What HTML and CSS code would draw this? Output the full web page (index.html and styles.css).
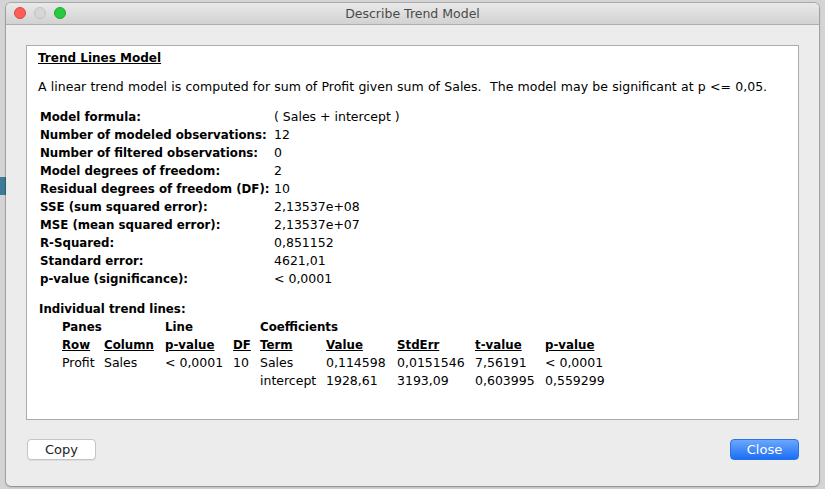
FILE: index.html
```html
<!DOCTYPE html>
<html>
<head>
<meta charset="utf-8">
<link rel="stylesheet" href="styles.css">
</head>
<body>
<div class="desk-mark"></div>
<div class="window">
  <div class="titlebar">
    <div class="lights">
      <span class="light red"></span>
      <span class="light gray"></span>
      <span class="light green"></span>
    </div>
    <div class="title">Describe Trend Model</div>
  </div>
  <div class="body">
    <div class="panel">
      <div class="heading">Trend Lines Model</div>
      <div class="intro">A linear trend model is computed for sum of Profit given sum of Sales.&nbsp; The model may be significant at p &lt;= 0,05.</div>
      <div class="stats">
        <div class="k">Model formula:</div><div class="v">( Sales + intercept )</div>
        <div class="k">Number of modeled observations:</div><div class="v">12</div>
        <div class="k">Number of filtered observations:</div><div class="v">0</div>
        <div class="k">Model degrees of freedom:</div><div class="v">2</div>
        <div class="k">Residual degrees of freedom (DF):</div><div class="v">10</div>
        <div class="k">SSE (sum squared error):</div><div class="v">2,13537e+08</div>
        <div class="k">MSE (mean squared error):</div><div class="v">2,13537e+07</div>
        <div class="k">R-Squared:</div><div class="v">0,851152</div>
        <div class="k">Standard error:</div><div class="v">4621,01</div>
        <div class="k">p-value (significance):</div><div class="v">&lt; 0,0001</div>
      </div>
      <div class="sub">Individual trend lines:</div>
      <div class="lines">
        <div class="grp span2">Panes</div>
        <div class="grp span2">Line</div>
        <div class="grp span5">Coefficients</div>

        <div class="h">Row</div>
        <div class="h">Column</div>
        <div class="h">p-value</div>
        <div class="h">DF</div>
        <div class="h">Term</div>
        <div class="h">Value</div>
        <div class="h">StdErr</div>
        <div class="h">t-value</div>
        <div class="h">p-value</div>

        <div>Profit</div>
        <div>Sales</div>
        <div>&lt; 0,0001</div>
        <div>10</div>
        <div>Sales</div>
        <div>0,114598</div>
        <div>0,0151546</div>
        <div>7,56191</div>
        <div>&lt; 0,0001</div>

        <div></div>
        <div></div>
        <div></div>
        <div></div>
        <div>intercept</div>
        <div>1928,61</div>
        <div>3193,09</div>
        <div>0,603995</div>
        <div>0,559299</div>
      </div>
    </div>
    <div class="buttons">
      <button class="btn copy">Copy</button>
      <button class="btn close">Close</button>
    </div>
  </div>
</div>
</body>
</html>
```
FILE: styles.css
```css
html, body {
  margin: 0;
  padding: 0;
}
body {
  width: 825px;
  height: 489px;
  background: #d4d4d4;
  font-family: "DejaVu Sans", "Liberation Sans", sans-serif;
  overflow: hidden;
  position: relative;
  padding: 3px 6px 0 6px;
  box-sizing: border-box;
}
.desk-mark {
  position: absolute;
  left: 0;
  top: 177px;
  width: 6px;
  height: 18px;
  background: #3f7b96;
}
.window {
  position: relative;
  width: 813px;
  height: 483px;
  background: #ececec;
  border-radius: 5px;
  box-shadow: 0 0 0 1px rgba(0,0,0,0.18), 0 1px 3px rgba(0,0,0,0.2);
  display: flex;
  flex-direction: column;
  overflow: hidden;
}
.titlebar {
  height: 21px;
  background: linear-gradient(#e9e9e9, #d2d2d2);
  border-bottom: 1px solid #aeaeae;
  position: relative;
  display: flex;
  align-items: center;
  justify-content: center;
  flex: none;
}
.lights {
  position: absolute;
  left: 8px;
  top: 4px;
  display: flex;
  gap: 8px;
}
.light {
  width: 12px;
  height: 12px;
  border-radius: 50%;
  box-sizing: border-box;
}
.light.red { background: #fc5f57; border: 1px solid #e0443e; }
.light.gray { background: #d6d6d6; border: 1px solid #c2c2c2; }
.light.green { background: #28c840; border: 1px solid #1aab29; }
.title {
  font-size: 12.5px;
  color: #4a4a4a;
}
.body {
  flex: 1;
  padding: 20px 20px 0 20px;
  display: flex;
  flex-direction: column;
}
.panel {
  background: #fff;
  border: 1px solid #ababab;
  height: 375px;
  box-sizing: border-box;
  padding: 3px 0 0 11px;
  font-size: 12.5px;
  line-height: 18px;
  color: #000;
}
.heading {
  font-weight: bold;
  font-size: 12px;
  text-decoration: underline;
}
.intro {
  margin-top: 11px;
  word-spacing: 0.3px;
}
.stats {
  margin-top: 12px;
  margin-left: 2px;
  display: grid;
  grid-template-columns: 234px auto;
}
.stats .k {
  font-weight: bold;
  font-size: 11.8px;
}
.sub {
  margin-top: 12px;
  margin-left: 1px;
  font-weight: bold;
  font-size: 11.8px;
}
.lines {
  margin-left: 24px;
  display: grid;
  grid-template-columns: 42px 61px 68px 27px 66px 71px 78px 70px 1fr;
  white-space: nowrap;
}
.lines .grp {
  font-weight: bold;
  font-size: 11.8px;
}
.span2 { grid-column: span 2; }
.span5 { grid-column: span 5; }
.lines .h {
  font-weight: bold;
  font-size: 11.8px;
  text-decoration: underline;
}
.buttons {
  display: flex;
  justify-content: space-between;
  margin-top: 19px;
  padding-left: 1px;
}
.btn {
  width: 69px;
  height: 21px;
  border-radius: 4px;
  font-family: "DejaVu Sans", "Liberation Sans", sans-serif;
  font-size: 13px;
  padding: 0;
  line-height: 19px;
}
.copy {
  background: #fff;
  border: 1px solid #c4c4c4;
  color: #222;
  box-shadow: 0 1px 0 rgba(0,0,0,0.06);
}
.close {
  background: linear-gradient(#6aa8fc, #1c6ef7);
  border: 1px solid #2a72e8;
  color: #fff;
}
```
